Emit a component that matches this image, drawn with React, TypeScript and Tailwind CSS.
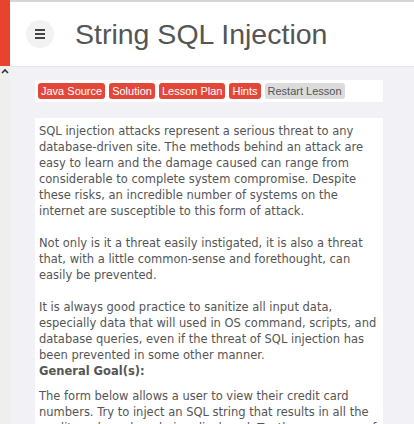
import React from "react";

export default function App() {
  const btn = "px-[3px] h-[16px] leading-[16px] rounded-[3px] bg-[#e2473a] text-white";
  return (
    <div className="w-[414px] h-[424px] overflow-hidden flex bg-[#f1f1f6]" style={{ fontFamily: '"DejaVu Sans", sans-serif' }}>
      <div className="w-[10px] shrink-0 flex flex-col bg-[#efefed]">
        <div className="h-[66px] shrink-0 bg-[#e8432e]" />
        <div className="h-[10px] shrink-0 flex items-center justify-center text-[#333]">
          <svg width="8" height="6" viewBox="0 0 8 6"><path d="M1 5 L4 2 L7 5" stroke="#333" strokeWidth="1.6" fill="none" /></svg>
        </div>
      </div>
      <div className="flex-1 flex flex-col">
        <div className="h-[67px] shrink-0 bg-white border-t-[2px] border-[#d6d6d6] border-b border-b-[#e6e6ee] flex items-center">
          <div className="ml-[16px] w-[28px] h-[28px] rounded-full bg-[#f2f2f2] flex flex-col items-center justify-center gap-[2px]">
            <div className="w-[10px] h-[2px] bg-[#444]" />
            <div className="w-[10px] h-[2px] bg-[#444]" />
            <div className="w-[10px] h-[2px] bg-[#444]" />
          </div>
          <div className="ml-[21px] text-[28.5px] text-[#555] leading-none" style={{ fontFamily: '"Liberation Sans", Arial, sans-serif' }}>
            String SQL Injection
          </div>
        </div>
        <div className="pl-[25px] pt-[13px] w-[373px] shrink-0">
          <div className="bg-white h-[22px] flex items-center gap-[4px] px-[3px] text-[11px]" style={{ fontFamily: '"Liberation Sans", Arial, sans-serif' }}>
            <span className={btn}>Java Source</span>
            <span className={btn}>Solution</span>
            <span className={btn}>Lesson Plan</span>
            <span className={btn}>Hints</span>
            <span className="px-[3px] h-[16px] leading-[16px] rounded-[3px] bg-[#dcdcdc] text-[#555]">Restart Lesson</span>
          </div>
          <div className="mt-[16px] bg-white px-[4px] pt-[5px] pb-[10px] text-[11.5px] leading-[16px] text-[#555]">
            <p>
              SQL injection attacks represent a serious threat to any database-driven site. The methods behind an attack are easy to learn and the damage caused can range from considerable to complete system compromise. Despite these risks, an incredible number of systems on the internet are susceptible to this form of attack.
              <br /><br />
              Not only is it a threat easily instigated, it is also a threat that, with a little common-sense and forethought, can easily be prevented.
              <br /><br />
              It is always good practice to sanitize all input data, especially data that will used in OS command, scripts, and database queries, even if the threat of SQL injection has been prevented in some other manner.
            </p>
            <div className="font-bold">General Goal(s):</div>
            <p className="mt-[9px]">
              The form below allows a user to view their credit card numbers. Try to inject an SQL string that results in all the credit card numbers being displayed. Try the user name of 'Smith'.
            </p>
          </div>
        </div>
      </div>
    </div>
  );
}
